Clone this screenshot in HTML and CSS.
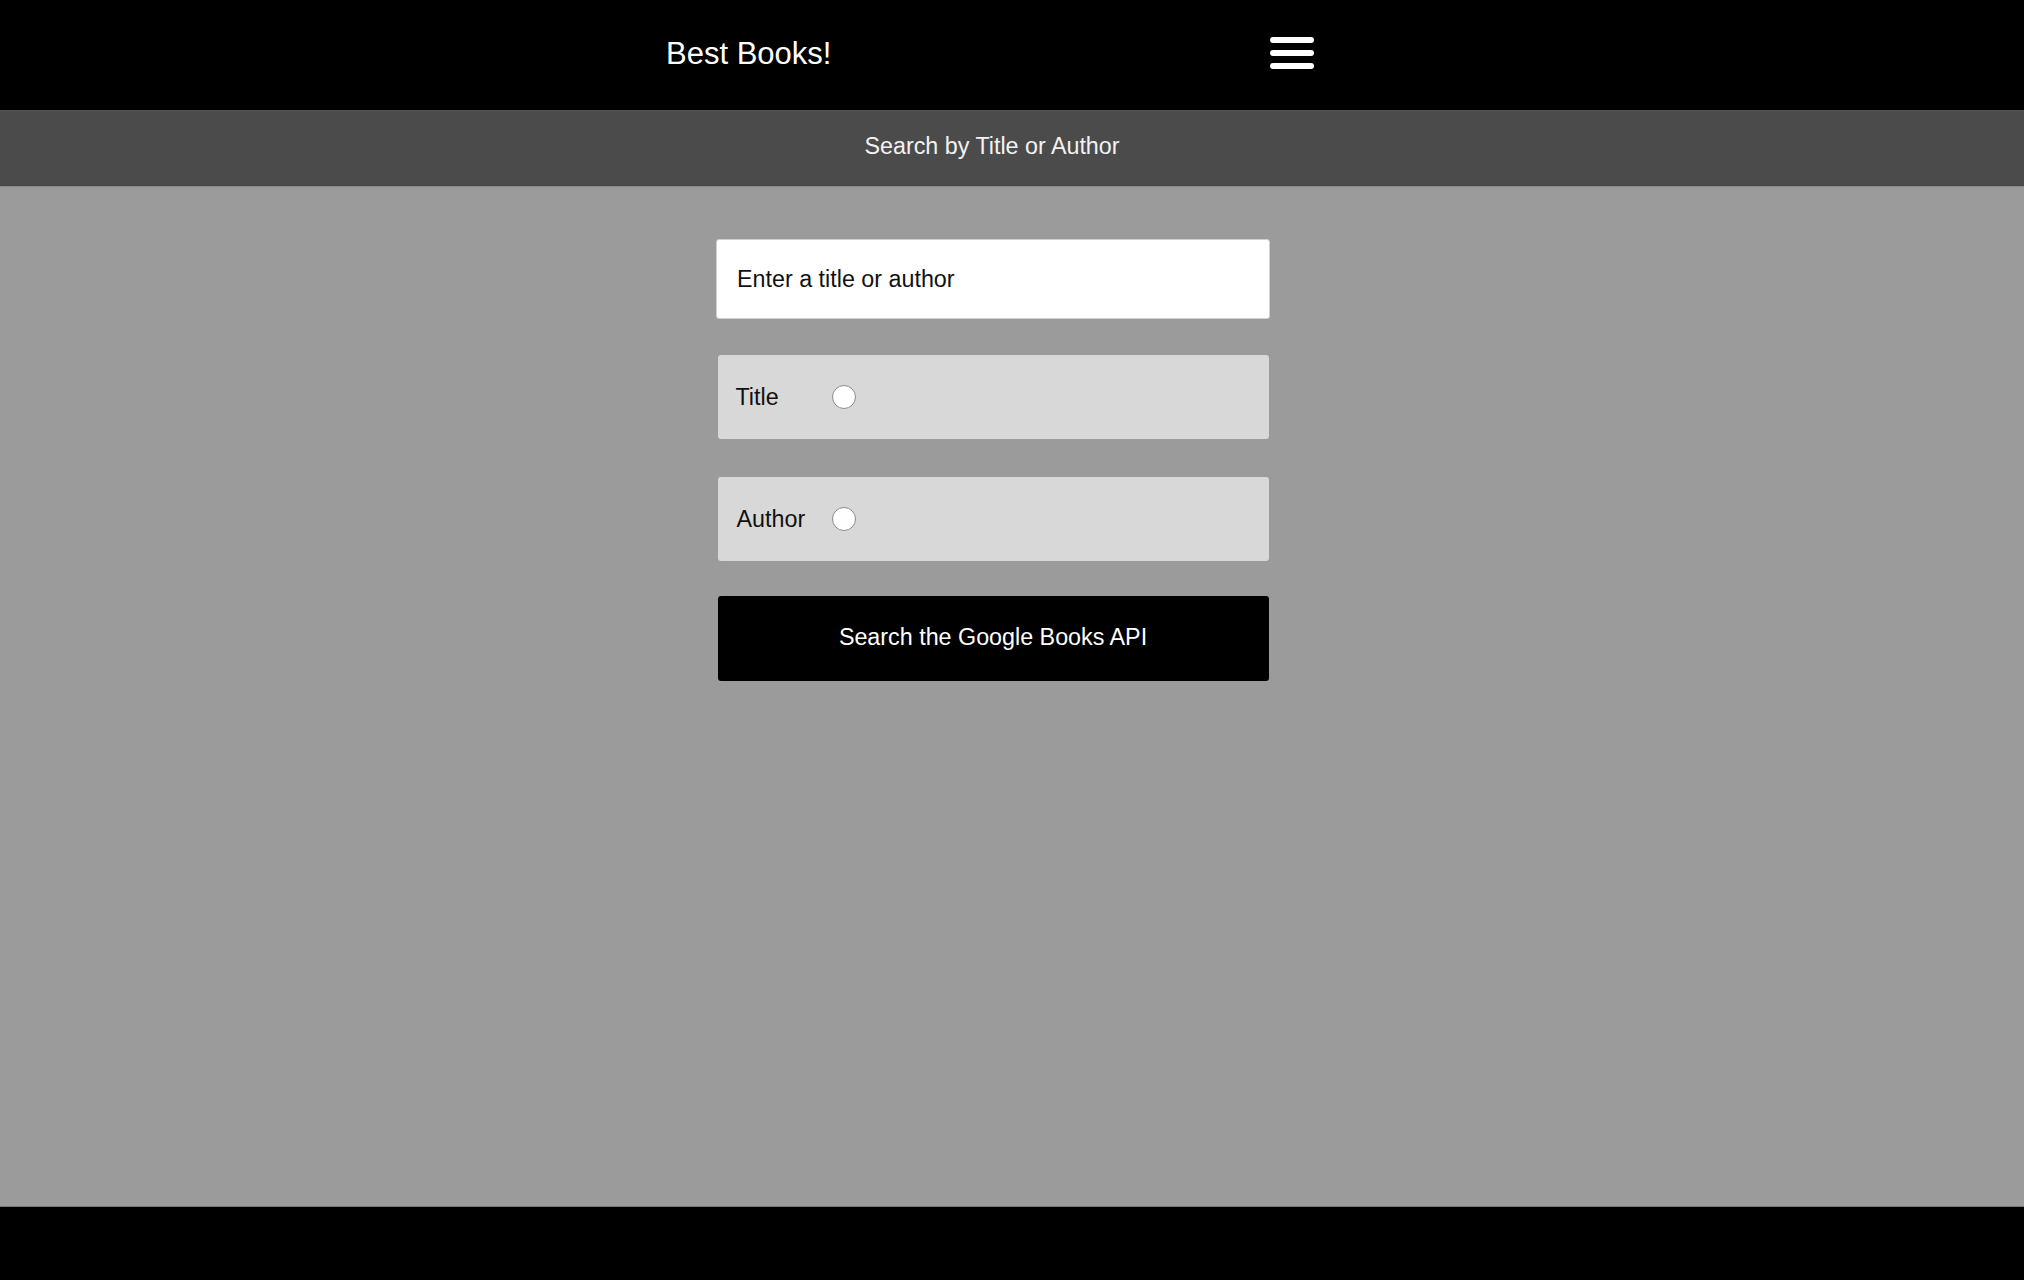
FILE: index.html
```html
<!DOCTYPE html>
<html lang="en">
<head>
<meta charset="utf-8">
<title>Best Books!</title>
<link rel="stylesheet" href="styles.css">
</head>
<body>
<div class="page">
  <header class="topbar">
    <div class="topbar-inner">
      <span class="brand">Best Books!</span>
      <button class="menu-btn" aria-label="Menu">
        <svg width="44" height="34" viewBox="0 0 44 34">
          <line x1="3" y1="4" x2="41" y2="4" stroke="#fff" stroke-width="6" stroke-linecap="round"/>
          <line x1="3" y1="17" x2="41" y2="17" stroke="#fff" stroke-width="6" stroke-linecap="round"/>
          <line x1="3" y1="30" x2="41" y2="30" stroke="#fff" stroke-width="6" stroke-linecap="round"/>
        </svg>
      </button>
    </div>
  </header>
  <div class="subbar"><span class="subbar-text">Search by Title or Author</span></div>
  <main class="main">
    <form class="search-form">
      <input class="query" type="text" placeholder="Enter a title or author">
      <label class="option">
        <span class="option-label">Title</span>
        <input class="radio" type="radio" name="by" value="title">
      </label>
      <label class="option">
        <span class="option-label option-label-author">Author</span>
        <input class="radio" type="radio" name="by" value="author">
      </label>
      <button class="submit" type="button">Search the Google Books API</button>
    </form>
  </main>
  <footer class="footer"></footer>
</div>
</body>
</html>
```
FILE: styles.css
```css
* { box-sizing: border-box; }
html, body { margin: 0; padding: 0; }
body {
  font-family: "Liberation Sans", Arial, Helvetica, sans-serif;
  background: #9b9b9b;
}
.page {
  display: flex;
  flex-direction: column;
  min-height: 100vh;
}
.topbar {
  background: #000;
  height: 110px;
  padding: 0 44px 5px 0;
  display: flex;
  align-items: center;
}
.topbar-inner {
  width: 648px;
  margin: 0 auto;
  display: flex;
  align-items: center;
  justify-content: space-between;
}
.brand {
  color: #fff;
  font-size: 31px;
  padding-top: 2px;
}
.menu-btn {
  background: none;
  border: 0;
  padding: 0;
  margin: 0;
  display: flex;
}
.subbar {
  background: #4b4b4b;
  height: 77px;
  border-top: 1px solid #555;
  border-bottom: 1px solid #888;
  display: flex;
  align-items: center;
  justify-content: center;
  padding: 0 40px 4px 0;
}
.subbar-text {
  color: #f2f2f2;
  font-size: 23.3px;
}
.main {
  flex: 1;
  background: #9b9b9b;
  padding: 52px 38px 0 0;
  display: flex;
  justify-content: center;
}
.search-form {
  width: 554px;
  display: flex;
  flex-direction: column;
  align-items: center;
}
.query {
  width: 554px;
  height: 80px;
  border: 1px solid #d0d0d0;
  border-radius: 3px;
  background: #fff;
  padding: 0 20px;
  font-family: inherit;
  font-size: 23.3px;
  color: #111;
  outline: none;
}
.query::placeholder { color: #111; opacity: 1; }
.option {
  width: 551px;
  height: 84px;
  margin-top: 36px;
  background: #d8d8d8;
  border-radius: 3px;
  display: flex;
  align-items: center;
  padding-left: 18px;
}
.option + .option { margin-top: 38px; }
.option-label {
  width: 96px;
  font-size: 23.3px;
  color: #111;
}
.option-label-author { padding-left: 1px; }
.radio {
  appearance: none;
  -webkit-appearance: none;
  margin: 0;
  width: 24px;
  height: 24px;
  border-radius: 50%;
  border: 1.5px solid #8a8a8a;
  background: #fff;
}
.submit {
  width: 551px;
  height: 85px;
  margin-top: 35px;
  background: #000;
  color: #fff;
  border: 0;
  border-radius: 3px;
  font-family: inherit;
  font-size: 23.3px;
  padding: 0 0 3px 0;
}
.footer {
  height: 74px;
  background: #000;
  border-top: 1px solid #777;
}
```
